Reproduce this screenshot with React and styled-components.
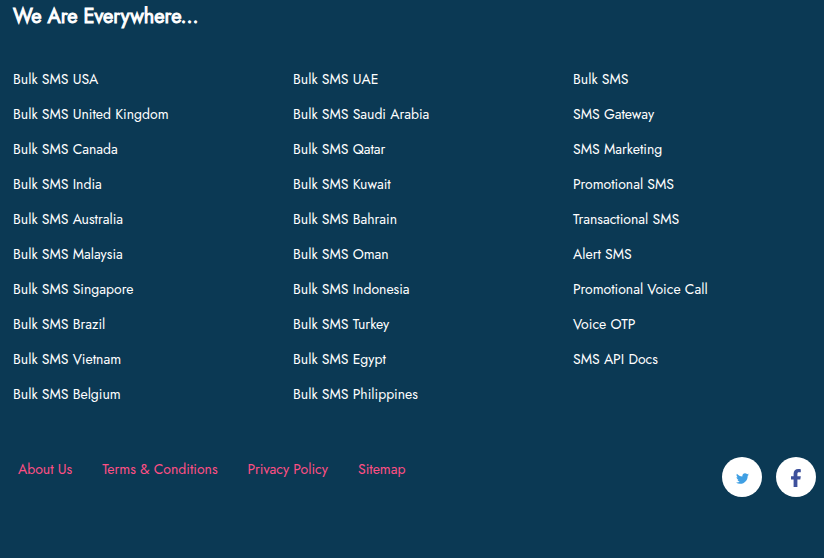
import React from 'react';
import styled, { createGlobalStyle } from 'styled-components';
import { FaTwitter } from 'react-icons/fa';

const GlobalStyle = createGlobalStyle`
  * { box-sizing: border-box; }
  body {
    margin: 0;
    background: #0b3954;
    font-family: Jost, Lato, sans-serif;
  }
`;

const Footer = styled.footer`
  width: 824px;
  height: 558px;
  overflow: hidden;
  background: #0b3954;
  color: #fff;
`;

const Heading = styled.h2`
  margin: 0;
  padding: 2px 0 0 13px;
  height: 62px;
  font-size: 20px;
  line-height: 30px;
  font-weight: 400;
  -webkit-text-stroke: 0.95px #fff;
`;

const Columns = styled.div`
  display: grid;
  grid-template-columns: 280px 280px 1fr;
  padding-left: 13px;
  height: 350px;
`;

const LinkList = styled.ul`
  list-style: none;
  margin: 0;
  padding: 0;
`;

const LinkItem = styled.li`
  height: 35px;
`;

const Link = styled.a`
  display: block;
  width: max-content;
  font-size: 14px;
  line-height: 34px;
  white-space: nowrap;
  text-decoration: none;
  color: ${(p) => (p.$accent ? '#ff4f84' : '#fff')};
`;

const BottomBar = styled.div`
  display: flex;
  justify-content: space-between;
  padding: 45px 8px 0 18px;
`;

const PolicyLinks = styled.nav`
  display: flex;
  gap: 30px;
  margin-top: -5px;
`;

const Socials = styled.div`
  display: flex;
  gap: 14px;
`;

const SocialButton = styled.a`
  display: flex;
  align-items: center;
  justify-content: center;
  width: 40px;
  height: 40px;
  padding-top: 2px;
  border-radius: 50%;
  background: #fff;
  color: ${(p) => p.$color};
`;

function FacebookIcon() {
  return (
    <svg width="10" height="18" viewBox="0 0 10 18" fill="currentColor">
      <path d="M2.6 18V10.6H0V7.2h2.6V4.8C2.6 1.7 4.4 0 7.2 0c1.2 0 2.3.1 2.6.2v3H8C6.700 3.200 6.400 3.900 6.400 4.900V7.200H9.800L9.300 10.600H6.400V18Z" />
    </svg>
  );
}

const columns = [
  [
    'Bulk SMS USA',
    'Bulk SMS United Kingdom',
    'Bulk SMS Canada',
    'Bulk SMS India',
    'Bulk SMS Australia',
    'Bulk SMS Malaysia',
    'Bulk SMS Singapore',
    'Bulk SMS Brazil',
    'Bulk SMS Vietnam',
    'Bulk SMS Belgium',
  ],
  [
    'Bulk SMS UAE',
    'Bulk SMS Saudi Arabia',
    'Bulk SMS Qatar',
    'Bulk SMS Kuwait',
    'Bulk SMS Bahrain',
    'Bulk SMS Oman',
    'Bulk SMS Indonesia',
    'Bulk SMS Turkey',
    'Bulk SMS Egypt',
    'Bulk SMS Philippines',
  ],
  [
    'Bulk SMS',
    'SMS Gateway',
    'SMS Marketing',
    'Promotional SMS',
    'Transactional SMS',
    'Alert SMS',
    'Promotional Voice Call',
    'Voice OTP',
    'SMS API Docs',
  ],
];

const policies = ['About Us', 'Terms & Conditions', 'Privacy Policy', 'Sitemap'];

export default function App() {
  return (
    <Footer>
      <GlobalStyle />
      <Heading>We Are Everywhere...</Heading>
      <Columns>
        {columns.map((items, i) => (
          <LinkList key={i}>
            {items.map((text) => (
              <LinkItem key={text}>
                <Link>{text}</Link>
              </LinkItem>
            ))}
          </LinkList>
        ))}
      </Columns>
      <BottomBar>
        <PolicyLinks>
          {policies.map((text) => (
            <Link key={text} $accent>
              {text}
            </Link>
          ))}
        </PolicyLinks>
        <Socials>
          <SocialButton $color="#3f9fe3" aria-label="Twitter">
            <FaTwitter size={13} />
          </SocialButton>
          <SocialButton $color="#3d509c" aria-label="Facebook">
            <FacebookIcon />
          </SocialButton>
        </Socials>
      </BottomBar>
    </Footer>
  );
}
